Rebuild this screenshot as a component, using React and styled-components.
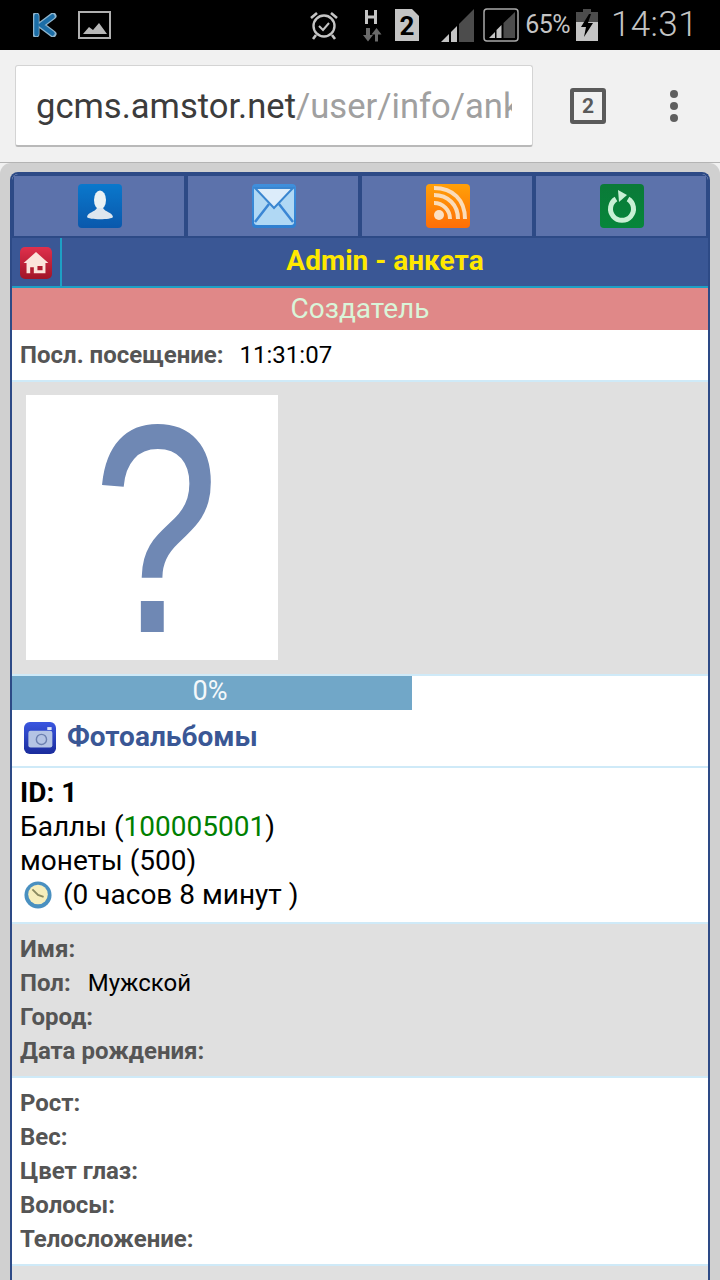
import React from "react";
import styled, { createGlobalStyle } from "styled-components";

const Global = createGlobalStyle`
  html, body { margin: 0; padding: 0; background: #d0d0d0; }
  body { font-family: Roboto, "Noto Sans", sans-serif; }
  #root { width: 720px; height: 1280px; overflow: hidden; }
`;
const Screen = styled.div`width: 720px; height: 1280px; overflow: hidden; display: flex; flex-direction: column; background: #f1f1f1;`;
const StatusBar = styled.div`height: 50px; flex: none; background: #000; display: flex; align-items: center; padding: 0 22px 0 33px; box-sizing: border-box; color: #c4c4c4;`;
const StatusLeft = styled.div`display: flex; align-items: center; gap: 21px; flex: 1;`;
const StatusRight = styled.div`display: flex; align-items: center;`;
const Slot = styled.span`display: flex; margin-left: ${p => p.$ml || 0}px;`;
const Pct = styled.span`font-size: 25px; letter-spacing: -0.6px; margin-left: 6px; line-height: 50px;`;
const Clock = styled.span`font-size: 35px; font-weight: 300; margin-left: 13px; line-height: 50px; letter-spacing: .4px;`;

const Toolbar = styled.div`height: 113px; flex: none; box-sizing: border-box; background: #f1f1f1; border-bottom: 1px solid #b4b4b4; display: flex; align-items: flex-start; padding: 15px 0 0 15px;`;
const UrlBox = styled.div`width: 518px; height: 82px; box-sizing: border-box; background: #fff; border: 1px solid #d4d4d4; border-bottom: 2px solid #b9b9b9; border-radius: 3px; padding: 0 20px; display: flex; align-items: center; overflow: hidden;`;
const UrlText = styled.div`font-size: 34.6px; white-space: nowrap; overflow: hidden; width: 100%; color: #a0a0a0;`;
const Host = styled.span`color: #3c3c3c;`;
const TabCount = styled.div`width: 36px; height: 36px; box-sizing: border-box; border: 4px solid #5a5a5a; border-radius: 3px; margin: 23px 0 0 37px; color: #5a5a5a; font-size: 21px; font-weight: 700; display: flex; align-items: center; justify-content: center;`;
const Dots = styled.div`display: flex; flex-direction: column; gap: 4px; margin: 25px 0 0 64px;`;
const Dot = styled.span`width: 8px; height: 8px; border-radius: 50%; background: #5f5f5f;`;

const PageBg = styled.div`flex: 1; min-height: 0; background: #d0d0d0; border-radius: 11px 11px 0 0; padding: 9px 10px 0;`;
const Panel = styled.div`border: 2px solid #2d4a86; border-bottom: 0; border-radius: 8px 8px 0 0; background: #fff; height: 100%; box-sizing: border-box; overflow: hidden;`;
const Tabs = styled.div`display: grid; grid-template-columns: repeat(4, 170px); gap: 4px; padding: 2px; background: #2d4a86;`;
const Tab = styled.div`height: 60px; padding-left: 1px; background: #5c72ab; display: flex; align-items: center; justify-content: center; box-sizing: border-box;`;
const Header = styled.div`height: 50px; display: flex; background: #3a5795; border-bottom: 2px solid #1ea0c4; box-sizing: border-box;`;
const HomeCell = styled.div`width: 50px; flex: none; box-sizing: border-box; border-right: 2px solid #1ea0c4; display: flex; align-items: center; justify-content: center; padding-top: 1px;`;
const Title = styled.div`flex: 1; text-align: center; color: #ffe800; font-size: 28px; font-weight: 700; line-height: 46px;`;
const Role = styled.div`height: 42px; background: #e08888; color: #d9f5d9; font-size: 28px; line-height: 41px; text-align: center;`;
const Section = styled.div`box-sizing: border-box; background: ${p => p.$grey ? "#e0e0e0" : "#fff"}; border-bottom: 2px solid #cfeaf8; padding: ${p => p.$pad || "0 8px"}; height: ${p => p.$h}px; font-size: ${p => p.$fs || 24}px; line-height: 34px; color: #000;`;
const Label = styled.b`color: #555; font-weight: 700;`;
const Value = styled.span`margin-left: ${p => p.$ml}px;`;
const Line = styled.div`height: 34px; display: flex; align-items: center; white-space: nowrap;`;
const PhotoWrap = styled.div`padding: 13px 0 0 14px;`;
const Photo = styled.div`width: 252px; height: 265px; box-sizing: border-box; padding: 3px 0 0 8px; background: #fff; display: flex; align-items: center; justify-content: center; overflow: hidden; filter: blur(.6px);`;
const Mark = styled.span`color: #6f88b4; -webkit-text-stroke: 2px #6f88b4; font-family: "Liberation Sans", sans-serif; font-size: 295px; line-height: 262px; transform: scaleX(.76);`;
const Track = styled.div`height: 34px; background: #fff;`;
const Bar = styled.div`height: 34px; box-sizing: border-box; padding-right: 4px; background: #71a7c8; color: #f4f8fa; font-size: 27px; line-height: 30px; text-align: center;`;
const AlbumRow = styled.div`display: flex; align-items: center; height: 100%; gap: 11px;`;
const AlbumLink = styled.span`color: #3a5795; font-size: 28px; font-weight: 700; padding-bottom: 2px;`;
const Bold = styled.div`font-weight: 700; height: 34px;`;
const Green = styled.span`color: #008000;`;
const ClockText = styled.span`margin-left: 11px;`;
const ClockWrap = styled.span`display: flex; margin-left: 4px;`;
const TileSvg = styled.svg`filter: blur(.5px); display: block;`;

const Alarm = () => (
  <svg width="30" height="30" viewBox="0 0 30 30" fill="none" stroke="#c4c4c4" strokeWidth="2.4">
    <circle cx="15" cy="16" r="10.5" /><path d="M10 16l4 4 6-7" strokeWidth="2" />
    <path d="M2 8l6-5M28 8l-6-5M7 25l-3 4M23 25l3 4" strokeWidth="2.6" />
  </svg>
);
const KIcon = () => (
  <svg width="24" height="24" viewBox="0 0 24 24">
    <path d="M3 3v18M20 3L8 12l12 9" fill="none" stroke="#8fb4cc" strokeWidth="7" strokeLinecap="round" strokeLinejoin="round" />
    <path d="M3.5 3v18M19.5 3.500L8 12l11.500 8.500" fill="none" stroke="#1b6da6" strokeWidth="4.500" strokeLinecap="round" strokeLinejoin="round" />
  </svg>
);
const Picture = () => (
  <svg width="33" height="28" viewBox="0 0 33 28">
    <rect x="1" y="1" width="31" height="26" fill="none" stroke="#b0b0b0" strokeWidth="2" />
    <path d="M5 23l6-7 4 3 6-7 8 11z" fill="#b8b8b8" />
  </svg>
);
const HUp = () => (
  <svg width="19" height="33" viewBox="0 0 19 33">
    <path d="M3.500 1v14M12.500 1v14M3.500 8h9" stroke="#c4c4c4" strokeWidth="3" fill="none" />
    <path d="M3 19h4v7h3l-5 6.500-5-6.500h3z" fill="#6a6a6a" />
    <path d="M12 32.500h3v-7h3.500l-5-6.500-5 6.500H12z" fill="#6a6a6a" />
  </svg>
);
const Sim = () => (
  <svg width="26" height="32" viewBox="0 0 26 32">
    <path d="M1 0h17l7 7v25H1z" fill="#c4c4c4" />
    <text x="13" y="26" textAnchor="middle" fontFamily="Roboto, sans-serif" fontWeight="700" fontSize="26" fill="#000">2</text>
  </svg>
);
const Signal = () => (
  <svg width="33" height="33" viewBox="0 0 33 33">
    <path d="M0 33l8-8v8z" fill="#c4c4c4" />
    <path d="M10 33V23l6-6v16z" fill="#c4c4c4" />
    <path d="M18 33V15L33 0v33z" fill="#4c4c4c" />
  </svg>
);
const SignalBox = () => (
  <svg width="36" height="34" viewBox="0 0 36 34">
    <rect x="1" y="1" width="34" height="32" rx="3" fill="none" stroke="#a8a8a8" strokeWidth="1.500" />
    <path d="M6 30l6-6v6z" fill="#c4c4c4" />
    <path d="M13.500 30v-8l5-5v13z" fill="#c4c4c4" />
    <path d="M20.500 30V15L32 4v26z" fill="#4c4c4c" />
  </svg>
);
const Battery = () => (
  <svg width="22" height="32" viewBox="0 0 22 32">
    <path d="M7 0h8v3h7v29H0V3h7z" fill="#4c4c4c" />
    <path d="M0 13h22v19H0z" fill="#c4c4c4" />
    <path d="M13 5L5 18h5l-2 10 9-14h-5l3-9z" fill="#000" />
  </svg>
);
const Tile = ({ id, from, to, size = 44, r = 4, children }) => (
  <TileSvg width={size} height={size} viewBox="0 0 44 44">
    <defs><linearGradient id={id} x1="0" y1="0" x2="0" y2="1"><stop offset="0" stopColor={from} /><stop offset="1" stopColor={to} /></linearGradient></defs>
    <rect width="44" height="44" rx={r} fill={`url(#${id})`} />
    {children}
  </TileSvg>
);
const UserIcon = () => (
  <Tile id="u" from="#0a78cc" to="#0a58ac">
    <ellipse cx="22" cy="16" rx="6" ry="9.500" fill="#eaf2f4" />
    <path d="M9 33c1-5 8-5 10-9h6c2 4 9 4 10 9-1 3-25 3-26 0z" fill="#dde6ee" />
  </Tile>
);
const MailIcon = () => (
  <Tile id="m" from="#3f8fdc" to="#2f7fd0">
    <rect x="2" y="3" width="40" height="38" rx="3" fill="#b0d8f4" />
    <path d="M3 4h38L22 24z" fill="#dcecfa" stroke="#3a86d0" strokeWidth="2" />
    <path d="M3 38l14-18M41 38L27 20" stroke="#3a86d4" strokeWidth="2.500" fill="none" />
  </Tile>
);
const RssIcon = () => (
  <Tile id="r" from="#ffa008" to="#ff6e06">
    <circle cx="13" cy="31" r="5" fill="#fbe0c4" />
    <path d="M8 19c9 0 16 7 16 16M8 11c14 0 24 10 24 24M8 4c19 0 31 12 31 31" fill="none" stroke="#fbdcb8" strokeWidth="4" />
  </Tile>
);
const ReloadIcon = () => (
  <Tile id="g" from="#0a7a38" to="#06863a">
    <path d="M16 15a11.500 11.500 0 1 0 12 0" fill="none" stroke="#c8f0d4" strokeWidth="5" />
    <path d="M18 6l9 5-8 7z" fill="#c8f0d4" />
  </Tile>
);
const HomeIcon = () => (
  <Tile id="h" from="#e0304c" to="#a01428" size={32} r={7}>
    <path d="M22 7L5 22h4v14h26V22h4z" fill="#fbe4dc" />
    <path d="M14 37v-9h5v9zM24 26h7v6h-7z" fill="#b01c30" />
  </Tile>
);
const CameraIcon = () => (
  <Tile id="c" from="#3a56e0" to="#1a2c9c" size={32} r={8}>
    <rect x="6" y="12" width="33" height="23" rx="3" fill="#b4c4e4" />
    <circle cx="24" cy="24" r="7" fill="none" stroke="#6c80b0" strokeWidth="2" />
    <rect x="32" y="7" width="6" height="4" fill="#dfe6f6" />
  </Tile>
);
const ClockIcon = () => (
  <TileSvg width="28" height="28" viewBox="0 0 30 30">
    <circle cx="15" cy="15" r="14.500" fill="#4a90c0" />
    <circle cx="15" cy="14.500" r="10.500" fill="#f6eebc" />
    <path d="M9 9l6 6 6 2" fill="none" stroke="#8a8a60" strokeWidth="2" />
  </TileSvg>
);

export default function App() {
  return (
    <Screen>
      <Global />
      <StatusBar>
        <StatusLeft><KIcon /><Picture /></StatusLeft>
        <StatusRight>
          <Alarm />
          <Slot $ml={24}><HUp /></Slot>
          <Slot $ml={12}><Sim /></Slot>
          <Slot $ml={21}><Signal /></Slot>
          <Slot $ml={9}><SignalBox /></Slot>
          <Pct>65%</Pct>
          <Slot $ml={6}><Battery /></Slot>
          <Clock>14:31</Clock>
        </StatusRight>
      </StatusBar>
      <Toolbar>
        <UrlBox><UrlText><Host>gcms.amstor.net</Host>/user/info/anketa</UrlText></UrlBox>
        <TabCount>2</TabCount>
        <Dots><Dot /><Dot /><Dot /></Dots>
      </Toolbar>
      <PageBg>
        <Panel>
          <Tabs>
            <Tab><UserIcon /></Tab>
            <Tab><MailIcon /></Tab>
            <Tab><RssIcon /></Tab>
            <Tab><ReloadIcon /></Tab>
          </Tabs>
          <Header>
            <HomeCell><HomeIcon /></HomeCell>
            <Title>Admin - анкета</Title>
          </Header>
          <Role>Создатель</Role>
          <Section $h={52} $pad="8px 8px 0">
            <Label>Посл. посещение:</Label><Value $ml={16}>11:31:07</Value>
          </Section>
          <Section $grey $h={294} $pad="0">
            <PhotoWrap><Photo><Mark>?</Mark></Photo></PhotoWrap>
          </Section>
          <Track><Bar style={{ width: "400px" }}>0%</Bar></Track>
          <Section $h={58} $pad="0 12px">
            <AlbumRow><CameraIcon /><AlbumLink>Фотоальбомы</AlbumLink></AlbumRow>
          </Section>
          <Section $h={156} $fs={28} $pad="8px 8px 0">
            <Bold>ID: 1</Bold>
            <Line>Баллы (<Green>100005001</Green>)</Line>
            <Line>монеты (500)</Line>
            <Line><ClockWrap><ClockIcon /></ClockWrap><ClockText>(0 часов 8 минут )</ClockText></Line>
          </Section>
          <Section $grey $h={154} $pad="8px 8px 0">
            <Line><Label>Имя:</Label></Line>
            <Line><Label>Пол:</Label><Value $ml={17}>Мужской</Value></Line>
            <Line><Label>Город:</Label></Line>
            <Line><Label>Дата рождения:</Label></Line>
          </Section>
          <Section $h={188} $pad="8px 8px 0">
            <Line><Label>Рост:</Label></Line>
            <Line><Label>Вес:</Label></Line>
            <Line><Label>Цвет глаз:</Label></Line>
            <Line><Label>Волосы:</Label></Line>
            <Line><Label>Телосложение:</Label></Line>
          </Section>
          <Section $grey $h={60} />
        </Panel>
      </PageBg>
    </Screen>
  );
}
